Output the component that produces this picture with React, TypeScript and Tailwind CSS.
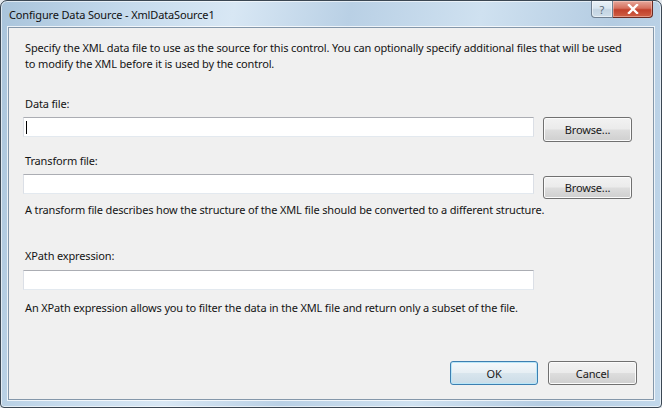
import React from "react";

const font = { fontFamily: '"Noto Sans", "Open Sans", sans-serif' };

function TextBox({ focused = false, className = "" }: { focused?: boolean; className?: string }) {
  return (
    <div
      className={
        "relative w-[511px] h-[20px] bg-white border border-t-[#abadb3] border-l-[#dbdfe6] border-r-[#dbdfe6] border-b-[#e3e9ef] " +
        className
      }
    >
      {focused && <div className="absolute left-[2px] top-[3px] w-[1px] h-[13px] bg-black" />}
    </div>
  );
}

function Btn({ label, def = false, className = "" }: { label: string; def?: boolean; className?: string }) {
  return (
    <div
      className={
        "flex items-center justify-center rounded-[3px] border text-[11px] leading-none text-[#1a1a1a] tracking-[-0.15px] " +
        (def
          ? "border-[#3c7fb1] bg-[linear-gradient(#f3f8fb_0%,#e7eff4_48%,#d8e5ed_52%,#cbdce7_100%)] shadow-[inset_0_0_0_1px_#b9e6f8] "
          : "border-[#707070] bg-[linear-gradient(#f2f2f2_0%,#ebebeb_48%,#dddddd_52%,#cfcfcf_100%)] shadow-[inset_0_0_0_1px_#fbfbfb] ") +
        className
      }
    >
      {label}
    </div>
  );
}

export default function App() {
  return (
    <div className="w-[662px] h-[408px] bg-[#e4e9ee] overflow-hidden" style={font}>
      <div className="w-full h-full flex flex-col rounded-t-[7px] rounded-b-[4px] border border-[#3b4753] bg-[linear-gradient(100deg,#a9c4db_0%,#c6dbed_18%,#d8e7f4_32%,#b9d0e5_48%,#cfe1f0_66%,#b4cce2_84%,#c2d8eb_100%)] shadow-[inset_0_0_0_1px_rgba(255,255,255,0.6)]">
        {/* title bar */}
        <div className="h-[26px] flex items-start shrink-0">
          <div className="pl-[8px] pt-[6px] text-[11px] leading-[16px] tracking-[-0.15px] text-[#111]">
            Configure Data Source - XmlDataSource1
          </div>
          <div className="ml-auto mr-[8px] flex">
            <div className="w-[22px] h-[17px] flex items-center justify-center rounded-bl-[4px] border border-t-0 border-[#6f8091] bg-[linear-gradient(#e9f1f7_0%,#d9e6f0_45%,#c3d4e2_55%,#cfdeea_100%)] text-[11px] leading-none text-[#5b6975] shadow-[inset_0_0_0_1px_rgba(255,255,255,0.5)]">
              ?
            </div>
            <div className="w-[40px] h-[17px] flex items-center justify-center rounded-br-[4px] border border-t-0 border-l-0 border-[#6b2a22] bg-[linear-gradient(#e7a89c_0%,#d6705e_45%,#c1402b_55%,#cf5f45_100%)] shadow-[inset_0_0_0_1px_rgba(255,220,210,0.45)]">
              <svg width="12" height="10" viewBox="0 0 12 10">
                <path d="M2 1 L10 9 M10 1 L2 9" stroke="#ffffff" strokeWidth="2.4" strokeLinecap="square" />
              </svg>
            </div>
          </div>
        </div>
        {/* client area */}
        <div className="flex-1 mx-[7px] mb-[7px] border border-[#8497aa] shadow-[0_0_0_1px_rgba(255,255,255,0.75)] bg-[#f0f0f0] flex flex-col text-[11px] leading-[16px] tracking-[-0.15px] text-[#141414]">
          <div className="pl-[14px] flex flex-col">
            <div className="mt-[12px] pl-[2px] w-[600px]">
              Specify the XML data file to use as the source for this control. You can optionally specify additional files that will be used to modify the XML before it is used by the control.
            </div>
            <div className="mt-[24px] pl-[2px]">Data file:</div>
            <div className="mt-[5px] flex items-start gap-[9px]">
              <TextBox focused />
              <Btn label="Browse..." className="w-[89px] h-[25px]" />
            </div>
            <div className="mt-[11px] pl-[2px]">Transform file:</div>
            <div className="mt-[5px] flex items-start gap-[9px]">
              <TextBox />
              <Btn label="Browse..." className="w-[89px] h-[23px] mt-[2px]" />
            </div>
            <div className="mt-[3px] pl-[2px]">
              A transform file describes how the structure of the XML file should be converted to a different structure.
            </div>
            <div className="mt-[30px] pl-[2px]">XPath expression:</div>
            <div className="mt-[6px] flex">
              <TextBox />
            </div>
            <div className="mt-[10px] pl-[2px]">
              An XPath expression allows you to filter the data in the XML file and return only a subset of the file.
            </div>
          </div>
          <div className="flex-1" />
          <div className="flex justify-end gap-[10px] pr-[16px] mb-[14px]">
            <Btn label="OK" def className="w-[88px] h-[24px]" />
            <Btn label="Cancel" className="w-[89px] h-[24px]" />
          </div>
        </div>
      </div>
    </div>
  );
}
